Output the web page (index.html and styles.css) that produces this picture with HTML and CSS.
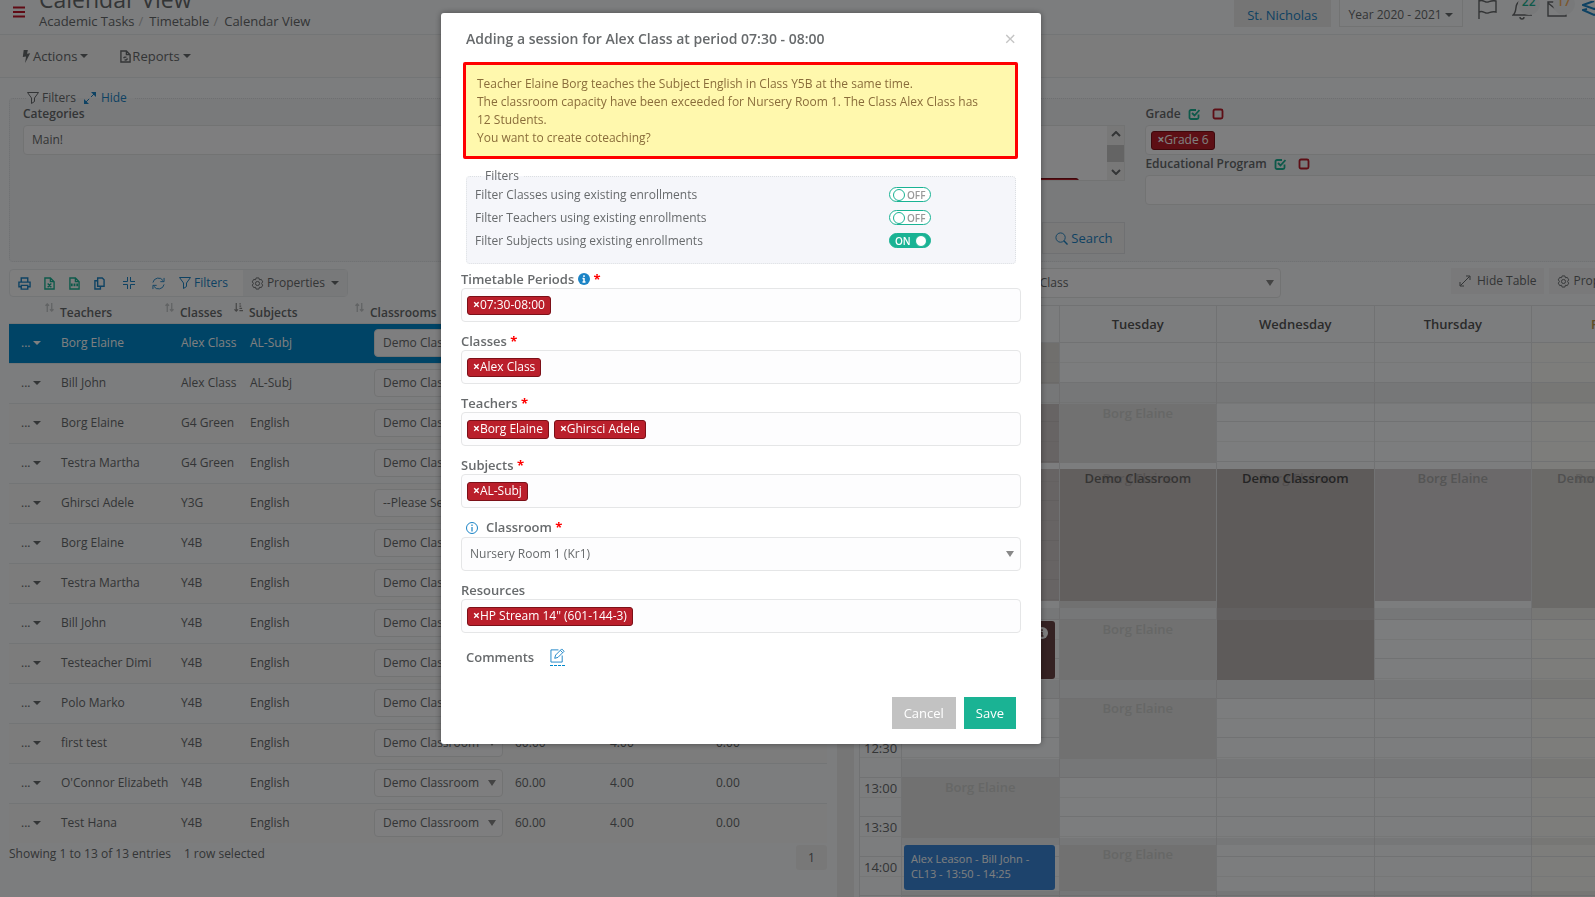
FILE: index.html
```
<!DOCTYPE html>
<html lang="en">
<head>
    <meta charset="UTF-8">
    <meta name="viewport" content="width=device-width, initial-scale=1.0">
    <title>Calendar View</title>
    <link rel="stylesheet" href="styles.css">
</head>
<body>

<!-- icon set -->
<svg class="sprite" aria-hidden="true">
    <symbol id="i-bars" viewBox="0 0 12 12"><path d="M0 1.5h12M0 6h12M0 10.5h12" stroke-width="2"/></symbol>
    <symbol id="i-bolt" viewBox="0 0 10 14"><path d="M2 0h4.500L5.500 4 9 3.500 3.500 14l1-7-3.500.5z" fill="currentColor" stroke="none"/></symbol>
    <symbol id="i-report" viewBox="0 0 12 14"><path d="M1 1h6l4 4v8H1zM7 1v4h4M4 9a2 2 0 0 1 3-1M8 9a2 2 0 0 1-3 1.500" stroke-width="1.500"/></symbol>
    <symbol id="i-funnel" viewBox="0 0 12 12"><path d="M.5.5h11L7.500 6v3.500l-3 2V6z"/></symbol>
    <symbol id="i-expand" viewBox="0 0 12 12"><path d="M2 10l8-8" stroke-dasharray="4.500 2.500"/><path d="M7 0h5v5zM0 7v5h5z" fill="currentColor" stroke="none"/></symbol>
    <symbol id="i-resize" viewBox="0 0 12 12"><path d="M1.500 10.500l9-9M7 1h4v4M1 7v4h4"/></symbol>
    <symbol id="i-print" viewBox="0 0 14 14"><path d="M3.500 5V1h7v4M3.500 10.500H1V5.500h12v5h-2.500M3.500 9h7v4h-7z" stroke-width="1.500"/></symbol>
    <symbol id="i-xls" viewBox="0 0 12 14"><path d="M1 1h6l4 4v8H1zM7 1v4h4M4 7l4 4M8 7l-4 4" stroke-width="1.500"/></symbol>
    <symbol id="i-csv" viewBox="0 0 12 14"><path d="M1 1h6l4 4v8H1zM7 1v4h4" stroke-width="1.500"/><path d="M2 8.500h8" stroke-width="3" stroke-dasharray="2 1"/></symbol>
    <symbol id="i-copy" viewBox="0 0 12 14"><path d="M4 1h5l2 2v7H4zM4 4H1v9h6v-3" stroke-width="1.500"/></symbol>
    <symbol id="i-collapse" viewBox="0 0 12 12"><path d="M0 4.500h4.500V0M7.500 0v4.500H12M0 7.500h4.500V12M7.500 12V7.500H12" stroke-width="1"/></symbol>
    <symbol id="i-refresh" viewBox="0 0 14 14"><path d="M1 6a6 6 0 0 1 11-2M13 1v4H9M13 8a6 6 0 0 1-11 2M1 13V9h4"/></symbol>
    <symbol id="i-gear" viewBox="0 0 14 14"><path d="M5.500 1h3l.6 2 2-.4 1.500 2.600L11.400 7l1.200 1.800-1.500 2.600-2-.4-.6 2h-3l-.6-2-2 .4L1.400 8.800 2.600 7 1.400 5.200l1.500-2.600 2 .4z"/><circle cx="7" cy="7" r="2.200"/></symbol>
    <symbol id="i-sort" viewBox="0 0 10 10"><path d="M2.500 10V1M.5 3l2-2 2 2M7.500 0v9M5.500 7l2 2 2-2" stroke-width="1.500"/></symbol>
    <symbol id="i-sorted" viewBox="0 0 10 10"><path d="M2.500 0v9M.5 7l2 2 2-2M6 1h1.500M6 3.500h2M6 6h3M6 8.500h4" stroke-width="1.300"/></symbol>
    <symbol id="i-check" viewBox="0 0 12 12"><path d="M10.500 6.500v3a1.500 1.500 0 0 1-1.500 1.500H3A1.500 1.500 0 0 1 1.500 9.500v-6A1.500 1.500 0 0 1 3 2h5M4 5l2.500 2.500 5-5.500" stroke-width="1.800"/></symbol>
    <symbol id="i-square" viewBox="0 0 12 12"><rect x="1.500" y="1.500" width="9" height="9" rx="1.500" stroke-width="1.800"/></symbol>
    <symbol id="i-search" viewBox="0 0 14 14"><circle cx="6" cy="6" r="5"/><path d="M9.500 9.500l4 4" stroke-width="1.500"/></symbol>
    <symbol id="i-up" viewBox="0 0 10 6"><path d="M1 5l4-4 4 4" stroke-width="2"/></symbol>
    <symbol id="i-down" viewBox="0 0 10 6"><path d="M1 1l4 4 4-4" stroke-width="2"/></symbol>
    <symbol id="i-flag" viewBox="0 0 20 22"><path d="M2 1v20M2 3c4-2 6 2 9 1s5-2 8-1v11c-3-1-5 0-8 1s-5-3-9-1" stroke-width="1.400"/></symbol>
    <symbol id="i-bell" viewBox="0 0 20 22"><path d="M1 17c4-3 2-8 4-11 2-4 8-4 10 0 2 3 0 8 4 11zM8 19a2 2 0 0 0 4 0" stroke-width="1.400"/></symbol>
    <symbol id="i-mail" viewBox="0 0 20 16"><path d="M1 1h18v14H1zM1 2l9 7 9-7" stroke-width="1.400"/></symbol>
    <symbol id="i-layers" viewBox="0 0 24 16"><path d="M12 0L1 4l11 4 11-4M5 8l-4 1 11 5 11-5" stroke-width="2"/></symbol>
    <symbol id="i-info" viewBox="0 0 12 12"><circle cx="6" cy="6" r="5.500"/><path d="M6 5v4.500M6 2.500V4" stroke-width="1.200"/></symbol>
    <symbol id="i-info-full" viewBox="0 0 12 12"><circle cx="6" cy="6" r="6" fill="currentColor" stroke="none"/><path d="M6 5v4.500M6 2.200V4M4.500 5.500H6M4.500 9h3" stroke="#fff" stroke-width="1.500"/></symbol>
    <symbol id="i-info-light" viewBox="0 0 12 12"><circle cx="6" cy="6" r="6" fill="#fff" stroke="none"/><path d="M6 5v4.500M6 2.200V4M4.500 5.500H6M4.500 9h3" stroke="#6b4446" stroke-width="1.500"/></symbol>
    <symbol id="i-edit" viewBox="0 0 16 16"><path d="M9 2H1v13h12V8M5 11l1-3.500L12.500 1l2.500 2.500L8.500 10zM11 2.500L13.500 5"/></symbol>
</svg>

<div class="page">
    <header class="topbar">
        <button class="icon-btn menu" aria-label="Menu"><svg class="ic s12"><use href="#i-bars"/></svg></button>
        <div class="heading">
            <h1>Calendar View</h1>
            <nav class="breadcrumb"><a href="#">Academic Tasks</a><i>/</i><a href="#">Timetable</a><i>/</i><span>Calendar View</span></nav>
        </div>
        <div class="top-tools">
            <button class="school">St. Nicholas</button>
            <button class="year">Year 2020 - 2021 <b class="caret"></b></button>
            <button class="icon-btn" aria-label="Flags"><svg class="ic big"><use href="#i-flag"/></svg></button>
            <button class="icon-btn" aria-label="Notifications"><svg class="ic big"><use href="#i-bell"/></svg><span class="badge green">22</span></button>
            <button class="icon-btn" aria-label="Messages"><svg class="ic mail"><use href="#i-mail"/></svg><span class="badge orange">17</span></button>
            <button class="icon-btn blue" aria-label="Modules"><svg class="ic layers"><use href="#i-layers"/></svg></button>
        </div>
    </header>

    <div class="menubar">
        <button><svg class="ic doc"><use href="#i-bolt"/></svg>Actions <b class="caret"></b></button>
        <button><svg class="ic doc"><use href="#i-report"/></svg>Reports <b class="caret"></b></button>
    </div>

    <fieldset class="filters">
        <legend><svg class="ic s12"><use href="#i-funnel"/></svg>Filters <a href="#" class="hide"><svg class="ic s12"><use href="#i-expand"/></svg>Hide</a></legend>
        <div class="filter-cols">
            <div class="col">
                <label for="categories">Categories</label>
                <input id="categories" class="box" type="text" value="Main!">
            </div>
            <div class="col">
                <label>Classes</label>
                <div class="scrollbox">
                    <div class="scroll-tags"><span class="tag">×English</span></div>
                    <div class="scrollbar"><svg class="ic arrow"><use href="#i-up"/></svg><span class="thumb"></span><svg class="ic arrow"><use href="#i-down"/></svg></div>
                </div>
                <button class="search"><svg class="ic s14"><use href="#i-search"/></svg>Search</button>
            </div>
            <div class="col">
                <label for="grade">Grade <svg class="ic s12 teal"><use href="#i-check"/></svg><svg class="ic s12 red"><use href="#i-square"/></svg></label>
                <div class="box tags"><span class="tag"><button aria-label="Remove">×</button>Grade 6</span><input id="grade" type="text"></div>
                <label for="program">Educational Program <svg class="ic s12 teal"><use href="#i-check"/></svg><svg class="ic s12 red"><use href="#i-square"/></svg></label>
                <input id="program" class="box" type="text">
            </div>
        </div>
    </fieldset>

    <main class="split">
        <section class="list">
            <div class="toolbar">
                <button aria-label="Print" class="blue"><svg class="ic s14"><use href="#i-print"/></svg></button>
                <button aria-label="Excel" class="teal"><svg class="ic doc"><use href="#i-xls"/></svg></button>
                <button aria-label="CSV" class="teal"><svg class="ic doc"><use href="#i-csv"/></svg></button>
                <button aria-label="Copy" class="blue"><svg class="ic doc"><use href="#i-copy"/></svg></button>
                <button aria-label="Collapse" class="blue wide"><svg class="ic s12"><use href="#i-collapse"/></svg></button>
                <button aria-label="Refresh" class="blue"><svg class="ic s14"><use href="#i-refresh"/></svg></button>
                <button class="blue text"><svg class="ic s12"><use href="#i-funnel"/></svg>Filters</button>
                <button class="props"><svg class="ic s14"><use href="#i-gear"/></svg>Properties <b class="caret"></b></button>
            </div>
            <table class="sessions">
                <colgroup><col class="c1"><col class="c2"><col class="c3"><col class="c4"><col class="c5"><col class="c6"><col class="c7"><col></colgroup>
                <thead>
                    <tr>
                        <th><svg class="ic sort"><use href="#i-sort"/></svg></th>
                        <th>Teachers<svg class="ic sort"><use href="#i-sort"/></svg></th>
                        <th>Classes<svg class="ic sort on"><use href="#i-sorted"/></svg></th>
                        <th>Subjects<svg class="ic sort"><use href="#i-sort"/></svg></th>
                        <th>Classrooms</th><th></th><th></th><th></th>
                    </tr>
                </thead>
                <tbody>
                    <tr class="selected"><td><button>... <b class="caret"></b></button></td><td>Borg Elaine</td><td>Alex Class</td><td>AL-Subj</td><td><select aria-label="Classroom"><option>Demo Classroom</option></select></td><td>60.00</td><td>4.00</td><td>0.00</td></tr>
                    <tr><td><button>... <b class="caret"></b></button></td><td>Bill John</td><td>Alex Class</td><td>AL-Subj</td><td><select aria-label="Classroom"><option>Demo Classroom</option></select></td><td>60.00</td><td>4.00</td><td>0.00</td></tr>
                    <tr><td><button>... <b class="caret"></b></button></td><td>Borg Elaine</td><td>G4 Green</td><td>English</td><td><select aria-label="Classroom"><option>Demo Classroom</option></select></td><td>60.00</td><td>4.00</td><td>0.00</td></tr>
                    <tr><td><button>... <b class="caret"></b></button></td><td>Testra Martha</td><td>G4 Green</td><td>English</td><td><select aria-label="Classroom"><option>Demo Classroom</option></select></td><td>60.00</td><td>4.00</td><td>0.00</td></tr>
                    <tr><td><button>... <b class="caret"></b></button></td><td>Ghirsci Adele</td><td>Y3G</td><td>English</td><td><select aria-label="Classroom"><option>--Please Select--</option></select></td><td>60.00</td><td>4.00</td><td>0.00</td></tr>
                    <tr><td><button>... <b class="caret"></b></button></td><td>Borg Elaine</td><td>Y4B</td><td>English</td><td><select aria-label="Classroom"><option>Demo Classroom</option></select></td><td>60.00</td><td>4.00</td><td>0.00</td></tr>
                    <tr><td><button>... <b class="caret"></b></button></td><td>Testra Martha</td><td>Y4B</td><td>English</td><td><select aria-label="Classroom"><option>Demo Classroom</option></select></td><td>60.00</td><td>4.00</td><td>0.00</td></tr>
                    <tr><td><button>... <b class="caret"></b></button></td><td>Bill John</td><td>Y4B</td><td>English</td><td><select aria-label="Classroom"><option>Demo Classroom</option></select></td><td>60.00</td><td>4.00</td><td>0.00</td></tr>
                    <tr><td><button>... <b class="caret"></b></button></td><td>Testeacher Dimi</td><td>Y4B</td><td>English</td><td><select aria-label="Classroom"><option>Demo Classroom</option></select></td><td>60.00</td><td>4.00</td><td>0.00</td></tr>
                    <tr><td><button>... <b class="caret"></b></button></td><td>Polo Marko</td><td>Y4B</td><td>English</td><td><select aria-label="Classroom"><option>Demo Classroom</option></select></td><td>60.00</td><td>4.00</td><td>0.00</td></tr>
                    <tr><td><button>... <b class="caret"></b></button></td><td>first test</td><td>Y4B</td><td>English</td><td><select aria-label="Classroom"><option>Demo Classroom</option></select></td><td>60.00</td><td>4.00</td><td>0.00</td></tr>
                    <tr><td><button>... <b class="caret"></b></button></td><td>O'Connor Elizabeth</td><td>Y4B</td><td>English</td><td><select aria-label="Classroom"><option>Demo Classroom</option></select></td><td>60.00</td><td>4.00</td><td>0.00</td></tr>
                    <tr><td><button>... <b class="caret"></b></button></td><td>Test Hana</td><td>Y4B</td><td>English</td><td><select aria-label="Classroom"><option>Demo Classroom</option></select></td><td>60.00</td><td>4.00</td><td>0.00</td></tr>
                </tbody>
            </table>
            <div class="list-foot"><span>Showing 1 to 13 of 13 entries</span><span>1 row selected</span><button class="pager">1</button></div>
        </section>

        <div class="splitter"></div>

        <section class="calendar">
            <div class="cal-tools">
                <select class="box" aria-label="Class"><option>Alex Class</option></select>
                <button><svg class="ic s12"><use href="#i-resize"/></svg>Hide Table</button>
                <button class="gear"><svg class="ic s14"><use href="#i-gear"/></svg>Properties <b class="caret"></b></button>
            </div>
            <div class="cal-head"><span></span><span>Monday</span><span>Tuesday</span><span>Wednesday</span><span>Thursday</span><span class="fri">Friday</span></div>
            <div class="cal-body">
                <div class="times">
                    <span>07:30</span><span>08:00</span><span>08:30</span><span>09:00</span><span>09:30</span><span>10:00</span><span>10:30</span>
                    <span>11:00</span><span>11:30</span><span>12:00</span><span>12:30</span><span>13:00</span><span>13:30</span><span>14:00</span><span>14:30</span>
                </div>
                <div class="day">
                    <div class="slot warm" style="top:0;height:41px"></div>
                    <div class="slot demo" style="top:61px;height:59px"></div>
                    <div class="slot demo" style="top:126px;height:132px"></div>
                    <div class="event maroon" style="top:278px;height:58px"><svg class="ic s12"><use href="#i-info-light"/></svg></div>
                    <div class="slot" style="top:435px;height:60px">Borg Elaine</div>
                    <div class="event" style="top:502px;height:45px">Alex Leason - Bill John - CL13 - 13:50 - 14:25</div>
                </div>
                <div class="day">
                    <div class="slot" style="top:61px;height:59px">Borg Elaine</div>
                    <div class="slot under" style="top:126px;height:139px">Borg Elaine</div>
                    <div class="slot demo" style="top:126px;height:132px">Demo Classroom</div>
                    <div class="slot" style="top:277px;height:60px">Borg Elaine</div>
                    <div class="slot" style="top:356px;height:60px">Borg Elaine</div>
                    <div class="slot" style="top:502px;height:46px">Borg Elaine</div>
                </div>
                <div class="day">
                    <div class="slot under" style="top:126px;height:211px">Borg Elaine</div>
                    <div class="slot demo dark" style="top:126px;height:211px">Demo Classroom</div>
                </div>
                <div class="day">
                    <div class="slot mauve" style="top:126px;height:132px">Borg Elaine</div>
                </div>
                <div class="day today">
                    <div class="slot under" style="top:126px;height:139px">Borg Elaine</div>
                    <div class="slot warm" style="top:126px;height:139px">Demo Classroom</div>
                </div>
                <div class="break" style="top:40px;height:21px"></div>
                <div class="break" style="top:265px;height:12px"></div>
                <div class="break" style="top:337px;height:19px"></div>
                <div class="break" style="top:416px;height:19px"></div>
                <div class="break" style="top:495px;height:7px"></div>
                <div class="break" style="top:548px;height:20px"></div>
            </div>
        </section>
    </main>
</div>

<div class="backdrop"></div>
<div class="modal-wrap">
    <form class="modal" role="dialog" aria-labelledby="modalTitle">
        <div class="modal-head">
            <h2 id="modalTitle">Adding a session for Alex Class at period 07:30 - 08:00</h2>
            <button type="button" class="close" aria-label="Close">×</button>
        </div>
        <div class="alert">
            Teacher Elaine Borg teaches the Subject English in Class Y5B at the same time.<br>
            The classroom capacity have been exceeded for Nursery Room 1. The Class Alex Class has<br>
            12 Students.<br>
            You want to create coteaching?
        </div>
        <fieldset class="options">
            <legend>Filters</legend>
            <label>Filter Classes using existing enrollments<input type="checkbox" class="toggle"></label>
            <label>Filter Teachers using existing enrollments<input type="checkbox" class="toggle"></label>
            <label>Filter Subjects using existing enrollments<input type="checkbox" class="toggle" checked></label>
        </fieldset>
        <div class="field">
            <label for="periods">Timetable Periods <svg class="ic s12 info"><use href="#i-info-full"/></svg><em>*</em></label>
            <div class="box tags"><span class="tag"><button type="button" aria-label="Remove">×</button>07:30-08:00</span><input id="periods" type="text"></div>
        </div>
        <div class="field">
            <label for="classes">Classes <em>*</em></label>
            <div class="box tags"><span class="tag"><button type="button" aria-label="Remove">×</button>Alex Class</span><input id="classes" type="text"></div>
        </div>
        <div class="field">
            <label for="teachers">Teachers <em>*</em></label>
            <div class="box tags"><span class="tag"><button type="button" aria-label="Remove">×</button>Borg Elaine</span><span class="tag"><button type="button" aria-label="Remove">×</button>Ghirsci Adele</span><input id="teachers" type="text"></div>
        </div>
        <div class="field">
            <label for="subjects">Subjects <em>*</em></label>
            <div class="box tags"><span class="tag"><button type="button" aria-label="Remove">×</button>AL-Subj</span><input id="subjects" type="text"></div>
        </div>
        <div class="field">
            <label for="classroom" class="indent"><svg class="ic s12 info lead"><use href="#i-info"/></svg>Classroom <em>*</em></label>
            <select id="classroom" class="box"><option>Nursery Room 1 (Kr1)</option></select>
        </div>
        <div class="field">
            <label for="resources">Resources</label>
            <div class="box tags"><span class="tag"><button type="button" aria-label="Remove">×</button>HP Stream 14" (601-144-3)</span><input id="resources" type="text"></div>
        </div>
        <div class="comments">
            <span>Comments</span>
            <a href="#" aria-label="Edit comments"><svg class="ic s16"><use href="#i-edit"/></svg></a>
        </div>
        <div class="modal-foot">
            <button type="button" class="cancel">Cancel</button>
            <button type="submit" class="save">Save</button>
        </div>
    </form>
</div>

</body>
</html>
```
FILE: styles.css
```
* {
    box-sizing: border-box;
}
body {
    margin: 0;
    height: 100vh;
    overflow: hidden;
    font-family: "Open Sans", "Noto Sans", sans-serif;
    font-size: 12px;
    line-height: 18px;
    color: #676a6c;
    background: #f9fbfd;
}
button, input, select {
    font: inherit;
    color: inherit;
}
button {
    display: inline-flex;
    align-items: center;
    padding: 0;
    border: 0;
    background: none;
    cursor: pointer;
}
a {
    color: inherit;
    text-decoration: none;
}
fieldset {
    min-width: 0;
    margin: 0;
    padding: 0;
    border: 1px dotted #dcdfe2;
    border-radius: 4px;
}

/* icons */
.sprite {
    display: none;
}
.ic {
    flex: none;
    fill: none;
    stroke: currentColor;
    stroke-width: 1;
}
.s12 { width: 12px; height: 12px; }
.s14 { width: 13px; height: 13px; }
.s16 { width: 15px; height: 15px; }
.doc { width: 11px; height: 13px; }
.big { width: 20px; height: 22px; }
.mail { width: 20px; height: 16px; }
.layers { width: 24px; height: 16px; }
.blue { color: #1c84c6; }
.teal { color: #1ab394; }
.red { color: #ba1c2a; }
.caret {
    display: inline-block;
    margin-left: 3px;
    border-top: 4px solid;
    border-left: 4px solid transparent;
    border-right: 4px solid transparent;
}

/* the sheet is wider than the window */
.page {
    width: 107%;
}
.topbar {
    display: flex;
    align-items: flex-end;
    height: 35px;
    overflow: hidden;
    border-bottom: 1px solid #e7eaec;
}
.menu {
    color: #c0162a;
    margin: 0 14px 16px 13px;
}
.heading {
    padding-bottom: 4px;
}
.heading h1 {
    margin: 0;
    font-size: 23px;
    font-weight: 400;
    line-height: 26px;
}
.breadcrumb {
    font-size: 13px;
}
.breadcrumb i {
    margin: 0 6px 0 4px;
    font-style: normal;
    color: #bbb;
}
.top-tools {
    display: flex;
    align-items: flex-end;
    gap: 12px;
    margin: 0 102px 7px auto;
}
.school, .year {
    height: 32px;
    padding: 8px 13px 0 13px;
    font-size: 13px;
}
.school {
    background: #ebebeb;
    color: #1c84c6;
    margin-right: -4px;
}
.year {
    padding: 8px 9px 0;
    margin-right: 2px;
    font-size: 12px;
    border: 1px solid #e5e6e7;
}
.top-tools .icon-btn {
    position: relative;
    width: 22px;
    height: 22px;
    margin-bottom: 7px;
    margin-right: 1px;
}
.badge {
    position: absolute;
    left: 6px;
    top: -5px;
    width: 22px;
    height: 22px;
    border-radius: 50%;
    background: #f1f3f5;
    font-size: 12px;
    font-weight: 600;
    line-height: 18px;
}
.green { color: #1ab394; }
.orange { color: #f8ac59; }

.menubar {
    display: flex;
    gap: 32px;
    height: 43px;
    padding-left: 21px;
    background: #f8f8f8;
    border-bottom: 1px solid #e7eaec;
    font-size: 13px;
}
.menubar .ic {
    margin-right: 1px;
}

.filters {
    margin: 13px 5px 0 9px;
    padding: 0 14px 7px 13px;
    background: #f2f4f7;
}
.filters legend {
    display: flex;
    align-items: center;
    margin-left: 4px;
    padding: 0 8px 0 0;
    line-height: 14px;
    background: linear-gradient(#f9fbfd 50%, #f2f4f7 50%);
}
.filters legend .ic {
    margin-right: 3px;
}
.hide {
    display: inline-flex;
    align-items: center;
    margin-left: 8px;
    color: #1c84c6;
}
.filters .hide .ic {
    margin-right: 5px;
}
.filter-cols {
    display: grid;
    grid-template-columns: repeat(3, 1fr);
    gap: 20px;
}
.col {
    display: flex;
    flex-direction: column;
}
.col label, .field label {
    display: flex;
    align-items: center;
    font-weight: 600;
    line-height: 18px;
    margin-bottom: 2px;
}
.col label .ic {
    margin-left: 7px;
}
.col label .ic + .ic {
    margin-left: 12px;
}
select {
    appearance: none;
    background: #fdfdfe url("data:image/svg+xml,%3Csvg xmlns='http://www.w3.org/2000/svg' width='8' height='6'%3E%3Cpath d='M0 0h8L4 6z' fill='%23888'/%3E%3C/svg%3E") no-repeat right 6px center;
}
.box {
    width: 100%;
    min-height: 30px;
    padding: 0 8px;
    border: 1px solid #e5e6e7;
    border-radius: 4px;
    background-color: #fdfdfe;
}
.tags {
    display: flex;
    align-items: center;
    gap: 5px;
    padding: 0 5px;
}
.tags input {
    flex: 1;
    min-width: 0;
    border: 0;
    outline: 0;
    background: none;
}
.tag {
    display: inline-flex;
    align-items: center;
    height: 19px;
    padding: 0 5px;
    border: 1px solid #7c1018;
    border-radius: 3px;
    background: #ba1f2b;
    color: #fff;
    white-space: nowrap;
}
.tag button {
    font-weight: 700;
}
.scrollbox {
    display: flex;
    justify-content: space-between;
    height: 56px;
    overflow: hidden;
    border: 1px solid #e5e6e7;
    background: #fdfdfe;
}
.scroll-tags {
    flex: 1;
    padding: 52px 28px 0 0;
    text-align: right;
}
.scrollbar {
    display: flex;
    flex-direction: column;
    align-items: center;
    justify-content: space-between;
    width: 17px;
    padding: 5px 0;
    background: #f1f1f1;
}
.thumb {
    width: 17px;
    height: 17px;
    background: #c8c8c8;
}
.arrow {
    width: 10px;
    height: 6px;
}
.search {
    align-self: flex-end;
    height: 32px;
    margin-top: 41px;
    padding: 0 12px;
    border: 1px solid #dfe1e4;
    background: #f2f2f2;
    color: #1c84c6;
    font-size: 13px;
}
.search .ic {
    margin-right: 3px;
}

/* sessions list */
.split {
    display: flex;
    padding: 0 17px 0 9px;
}
.list {
    width: 818px;
    padding-top: 7px;
}
.toolbar {
    display: inline-flex;
    height: 28px;
    border: 1px solid #e7eaec;
    border-radius: 4px;
    background: #fcfcfd;
}
.toolbar button {
    justify-content: center;
    width: 24px;
    margin-left: 1px;
}
.toolbar button:first-child {
    margin-left: 2px;
}
.toolbar .wide {
    width: 32px;
    margin-left: 2px;
}
.toolbar .text {
    width: auto;
    margin: 0 15px 0 9px;
    gap: 3px;
}
.toolbar .props {
    width: auto;
    margin: 0;
    padding: 0 8px;
    gap: 3px;
    background: #f1f2f4;
}
.sessions {
    width: 100%;
    table-layout: fixed;
    border-collapse: collapse;
}
.c1 { width: 47px; }
.c2 { width: 120px; }
.c3 { width: 69px; }
.c4 { width: 121px; }
.c5 { width: 144px; }
.c6 { width: 95px; }
.c7 { width: 106px; }
.sessions th {
    position: relative;
    height: 26px;
    padding: 6px 0 0 4px;
    text-align: left;
    font-weight: 600;
    line-height: 18px;
}
.sort {
    position: absolute;
    right: 2px;
    top: 6px;
    width: 9px;
    height: 9px;
    color: #c5c8ca;
}
.sort.on {
    color: #888;
}
.sessions td {
    height: 40px;
    padding: 0 0 0 5px;
    border-top: 1px solid #e7eaec;
}
.sessions td:first-child {
    padding-left: 12px;
}
.sessions td:nth-child(5) {
    padding-left: 8px;
}
.sessions tbody tr:nth-child(odd) {
    background: #f8f8f8;
}
.sessions tbody tr.selected {
    background: #0088cc;
    color: #fff;
}
.sessions select {
    width: 129px;
    height: 28px;
    padding: 0 8px;
    border: 1px solid #e5e6e7;
    border-radius: 4px;
    color: #676a6c;
}
.list-foot {
    display: flex;
    gap: 13px;
    padding-top: 2px;
}
.pager {
    justify-content: center;
    width: 31px;
    height: 25px;
    margin-left: auto;
    border-radius: 3px;
    background: #f1f1f1;
}
.splitter {
    width: 17px;
    margin: 0 5px 0 10px;
    background: #ececec;
}

/* calendar */
.calendar {
    flex: 1;
    min-width: 0;
}
.cal-tools {
    display: flex;
    align-items: flex-start;
    gap: 5px;
    height: 43px;
    padding-top: 6px;
}
.cal-tools select {
    width: 277px;
    margin: 0 165px 0 145px;
}
.cal-tools button {
    height: 26px;
    padding: 0 8px;
    gap: 6px;
    background: #f2f3f5;
    white-space: nowrap;
}
.cal-tools .gear {
    gap: 3px;
}
.cal-head, .cal-body {
    display: grid;
    grid-template-columns: 42px repeat(5, 1fr);
    border-left: 1px solid #e2e4e6;
}
.cal-head span {
    height: 38px;
    border: 1px solid #e2e4e6;
    border-left: 0;
    text-align: center;
    font-size: 13px;
    font-weight: 600;
    line-height: 36px;
    color: #555;
}
.cal-head .fri {
    color: #c09a50;
}
.cal-body {
    position: relative;
    height: 568px;
    overflow: hidden;
}
.times, .day {
    position: relative;
    border-right: 1px solid #e2e4e6;
    background: repeating-linear-gradient(transparent 0 19px, #eceeef 19px 20px, transparent 20px 39px, #e2e4e6 39px 40px, transparent 40px 59px, #eceeef 59px 60px, transparent 60px 78px, #e2e4e6 78px 79px);
}
.times span {
    display: block;
    height: 40px;
    padding: 1px 4px 0;
    text-align: right;
    font-size: 13px;
}
.times span:nth-child(even) {
    height: 39px;
}
.day.today {
    background-color: #fbfaf6;
}
.slot {
    position: absolute;
    left: 0;
    right: 0;
    background: #e2e2e2;
    text-align: center;
    font-size: 13px;
    font-weight: 600;
    line-height: 18px;
    color: #cccecc;
}
.slot.under {
    color: #a8a8a8;
}
.slot.demo {
    background: rgba(176, 167, 165, .6);
    color: #6c6a69;
}
.slot.dark {
    background: rgba(164, 154, 152, .6);
    color: #4a4a4a;
}
.slot.mauve {
    background: #d6d3d4;
    color: #aaa;
}
.slot.warm {
    background: rgba(206, 204, 196, .6);
    color: #a0a0a0;
}
.event {
    position: absolute;
    left: 2px;
    right: 4px;
    padding: 6px 7px;
    border-radius: 3px;
    background: #3a87d8;
    color: #fff;
    font-size: 11px;
    line-height: 15px;
}
.maroon {
    background: #6b4446;
    text-align: right;
}
.break {
    position: absolute;
    left: 42px;
    right: 0;
    background: rgba(215, 215, 215, .35);
}

/* dialog */
.backdrop {
    position: fixed;
    inset: 0;
    background: rgba(0, 0, 0, .5);
}
.modal-wrap {
    position: fixed;
    inset: 0 113px auto 0;
    display: flex;
    justify-content: center;
    padding-top: 13px;
}
.modal {
    width: 600px;
    padding: 0 20px 15px;
    border-radius: 3px;
    background: #fff;
    box-shadow: 0 0 6px rgba(0, 0, 0, .4);
}
.modal-head {
    display: flex;
    align-items: center;
    justify-content: space-between;
    height: 49px;
    padding: 3px 5px 0 5px;
}
.modal-head h2 {
    margin: 0;
    font-size: 14px;
    font-weight: 600;
}
.close {
    font-size: 20px;
    color: #c4c4c4;
}
.alert {
    margin: 0 3px 10px 2px;
    padding: 10px 11px 9px;
    border: 3px solid #f00;
    border-radius: 2px;
    background: #fff8ad;
    color: #8a6d3b;
}
.options {
    margin: 0 5px 6px;
    padding: 0 0 11px 8px;
    background: #f5f6fa;
}
.options legend {
    margin-left: 6px;
    padding: 0 4px;
    line-height: 14px;
    background: linear-gradient(#fff 50%, #f5f6fa 50%);
}
.options label {
    display: grid;
    grid-template-columns: 414px auto;
    align-items: center;
    justify-content: start;
    height: 23px;
}
.toggle {
    display: flex;
    align-items: center;
    appearance: none;
    width: 42px;
    height: 15px;
    margin: 0;
    padding: 0 3px;
    border: 1px solid #1ab394;
    border-radius: 8px;
    background: #fff;
    font-size: 10px;
    font-weight: 600;
    color: #999;
}
.toggle::before {
    content: "";
    width: 10px;
    height: 10px;
    border: 1px solid #1ab394;
    border-radius: 50%;
    background: #fff;
}
.toggle::after {
    content: "OFF";
    margin-left: 2px;
}
.toggle:checked {
    flex-direction: row-reverse;
    justify-content: space-between;
    background: #1ab394;
    color: #fff;
}
.toggle:checked::after {
    content: "ON";
}
.field {
    margin-bottom: 10px;
}
.field label, .comments {
    font-size: 13px;
    font-weight: 600;
    margin: 0;
    white-space: pre;
}
.field .box {
    display: flex;
    height: 34px;
    font-size: 12px;
}
.field em {
    font-style: normal;
    font-weight: 700;
    color: #f00;
}
.info {
    margin-right: 4px;
    color: #1c84c6;
}
.field .indent {
    padding-left: 5px;
    line-height: 19px;
}
.lead {
    margin-right: 8px;
}
.comments {
    display: flex;
    align-items: center;
    gap: 16px;
    padding: 5px 5px 0;
    color: #676a6c;
}
.comments a {
    display: flex;
    padding-bottom: 2px;
    border-bottom: 1px dashed #0088cc;
    color: #1c84c6;
}
.modal-foot {
    display: flex;
    justify-content: flex-end;
    gap: 8px;
    padding: 31px 5px 0;
}
.modal-foot button {
    height: 32px;
    padding: 0 12px;
    color: #fff;
    font-size: 13px;
}
.cancel {
    background: #c2c2c2;
}
.save {
    background: #1ab394;
}
```
